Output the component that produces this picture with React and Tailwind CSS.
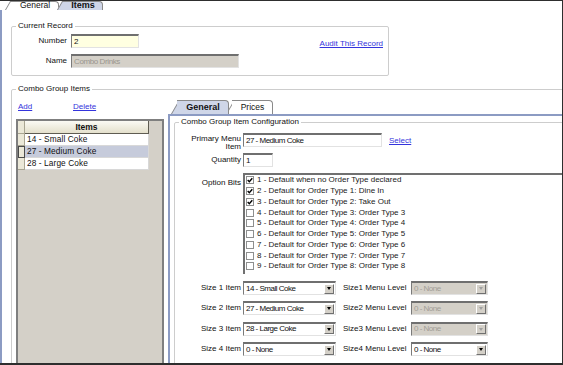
import React from "react";

const sunken =
  "border-t-2 border-l border-r border-b border-t-[#6f6f6f] border-l-[#7a7a7a] border-r-[#e2e2e2] border-b-[#e2e2e2]";
const link = "text-[#3434dc] underline leading-[10px]";

const bits = [
  [true, "1 - Default when no Order Type declared"],
  [true, "2 - Default for Order Type 1: Dine In"],
  [true, "3 - Default for Order Type 2: Take Out"],
  [false, "4 - Default for Order Type 3: Order Type 3"],
  [false, "5 - Default for Order Type 4: Order Type 4"],
  [false, "6 - Default for Order Type 5: Order Type 5"],
  [false, "7 - Default for Order Type 6: Order Type 6"],
  [false, "8 - Default for Order Type 7: Order Type 7"],
  [false, "9 - Default for Order Type 8: Order Type 8"],
];

const sizes = [
  ["Size 1 Item", "14 - Small Coke", "Size1 Menu Level", true],
  ["Size 2 Item", "27 - Medium Coke", "Size2 Menu Level", true],
  ["Size 3 Item", "28 - Large Coke", "Size3 Menu Level", true],
  ["Size 4 Item", "0 - None", "Size4 Menu Level", false],
];

const Tab = ({ label, active, className }) => {
  const bg = active ? "bg-[#cfd6e8]" : "bg-white";
  return (
    <div className={`relative h-full ${active ? "z-10 font-bold text-[9px]" : "text-[8.5px]"} ${className}`}>
      <div
        className={`absolute inset-y-0 left-0 w-[12px] -skew-x-[30deg] origin-bottom-left border-l border-t border-[#8a8a8a] ${bg}`}
      />
      <div
        className={`absolute inset-y-0 left-[6px] right-0 border-t border-r border-[#8a8a8a] rounded-tr-[4px] ${bg}`}
      />
      <span className="relative flex h-full items-center justify-center pl-[6px] leading-none">
        {label}
      </span>
    </div>
  );
};

const Select = ({ value, w, disabled }) => (
  <div
    className={`flex items-center h-[14px] ${w} ${sunken} ${
      disabled ? "bg-[#d4d0c8] text-[#a19d95]" : "bg-white"
    }`}
  >
    <span className="flex-1 pl-[2px] text-[8px] tracking-[-0.5px] leading-none whitespace-nowrap overflow-hidden">
      {value}
    </span>
    <span className="w-[10px] h-[10px] mr-[1px] bg-[#d4d0c8] border border-t-white border-l-white border-r-[#707070] border-b-[#707070] flex items-center justify-center">
      <span
        className={`border-x-[2.5px] border-x-transparent border-t-[3px] ${
          disabled ? "border-t-[#a0a0a0]" : "border-t-black"
        }`}
      />
    </span>
  </div>
);

const App = () => {
  return (
    <div className="w-[563px] h-[365px] overflow-hidden bg-white border-t border-r border-b-2 border-[#2e2e2e] text-[8px] text-[#111] font-['Liberation_Sans',Arial,sans-serif] flex flex-col">
      {/* top tabs */}
      <div className="flex h-[12px] pl-[5px] items-end">
        <Tab label="General" className="w-[54px]" />
        <Tab label="Items" active className="w-[46px] -ml-[2px]" />
      </div>
      <div className="h-[2px] bg-[#8c9bc3]" />

      <div className="flex-1 border-l-2 border-[#8c9bc3]">
        {/* Current Record */}
        <fieldset className="mt-[11px] ml-[9px] w-[378px] h-[55px] border border-[#cdcdcd] rounded-[2px]">
          <legend className="ml-[4px] px-[2px] leading-[10px]">Current Record</legend>
          <div className="flex">
            <div className="flex flex-col">
              <div className="flex items-center mt-[3px] h-[14px]">
                <span className="w-[55px] text-right">Number</span>
                <div className={`ml-[4px] w-[68px] h-[14px] bg-[#ffffe1] ${sunken} flex items-center pl-[2px] text-[8px]`}>
                  2
                </div>
              </div>
              <div className="flex items-center mt-[6px] h-[14px]">
                <span className="w-[55px] text-right">Name</span>
                <div className={`ml-[4px] w-[168px] h-[14px] bg-[#d4d0c8] text-[#9a968e] ${sunken} flex items-center pl-[2px] text-[8px] tracking-[-0.4px]`}>
                  Combo Drinks
                </div>
              </div>
            </div>
            <a className={`${link} ml-auto mr-[5px] mt-[8px]`}>Audit This Record</a>
          </div>
        </fieldset>

        {/* Combo Group Items */}
        <fieldset className="mt-[8px] ml-[9px] w-[600px] h-[300px] border border-[#cdcdcd] rounded-[2px]">
          <legend className="ml-[4px] px-[2px] leading-[10px]">Combo Group Items</legend>
          <div className="flex items-start">
            {/* list column */}
            <div className="w-[156px] flex flex-col">
              <div className="flex mt-[8px] pl-[6px]">
                <a className={`${link} w-[55px]`}>Add</a>
                <a className={link}>Delete</a>
              </div>
              <div className="mt-[7px] ml-[4px] w-[148px] h-[260px] border-2 border-[#7f7f7f] bg-[#d4d0c8]">
                <div className="flex h-[13px]">
                  <div className="w-[7px] bg-[#ebe8d8] border-r border-b border-[#a9a592]" />
                  <div className="w-[124px] bg-linear-to-b from-[#fbfaf4] to-[#e4e0cc] border-r border-b border-[#5f5c52] font-bold text-[8.5px] flex items-center justify-center">
                    Items
                  </div>
                </div>
                {["14 - Small Coke", "27 - Medium Coke", "28 - Large Coke"].map((it, i) => (
                  <div key={it} className="flex h-[12px]">
                    <div
                      className={`w-[7px] bg-[#ebe8d8] border-r border-b ${
                        i === 1 ? "border-l border-t border-[#4a4a4a]" : "border-[#a9a592]"
                      }`}
                    />
                    <div
                      className={`w-[124px] border-b border-r border-[#d8d8d8] flex items-center pl-[2px] text-[8.3px] tracking-[0.1px] ${
                        i === 1 ? "bg-[#c6cbdb]" : "bg-white"
                      }`}
                    >
                      {it}
                    </div>
                  </div>
                ))}
              </div>
            </div>

            {/* detail tabs */}
            <div className="flex-1 mt-[6px] flex flex-col">
              <div className="flex h-[14px] pl-[3px] items-end">
                <Tab label="General" active className="w-[58px]" />
                <Tab label="Prices" className="w-[47px] -ml-[3px]" />
              </div>
              <div className="h-[2px] bg-[#8c9bc3]" />
              <div className="border-l-2 border-[#8c9bc3] h-[260px]">
                <fieldset className="mt-[1px] ml-[4px] w-[420px] h-[300px] border border-[#cdcdcd] rounded-[2px]">
                  <legend className="ml-[4px] px-[2px] leading-[10px]">
                    Combo Group Item Configuration
                  </legend>

                  <div className="flex mt-[6px] h-[16px]">
                    <span className="w-[66px] text-right leading-[7.5px] pt-[2px]">
                      Primary Menu
                      <br />
                      Item
                    </span>
                    <div className={`ml-[2px] w-[139px] h-[14px] bg-white ${sunken} flex items-center pl-[2px] text-[8px] tracking-[-0.5px]`}>
                      27 - Medium Coke
                    </div>
                    <a className={`${link} ml-[7px] mt-[3px]`}>Select</a>
                  </div>

                  <div className="flex items-center mt-[4px] h-[14px]">
                    <span className="w-[66px] text-right">Quantity</span>
                    <div className={`ml-[2px] w-[30px] h-[14px] bg-white ${sunken} flex items-center pl-[2px]`}>
                      1
                    </div>
                  </div>

                  <div className="flex mt-[6px]">
                    <span className="w-[66px] text-right pt-[4px]">Option Bits</span>
                    <div className={`ml-[2px] w-[330px] h-[101px] bg-white border-t-2 border-l-2 border-[#707070]`}>
                      {bits.map(([on, label]) => (
                        <div key={label} className="flex items-center h-[10.75px]">
                          <span className="ml-[1px] mr-[3px] w-[8px] h-[8px] border border-[#8e8f8f] bg-white flex items-center justify-center">
                            {on && (
                              <svg width="6" height="6" viewBox="0 0 6 6">
                                <path d="M0.7 3 L2.3 4.7 L5.3 1.2" fill="none" stroke="#000" strokeWidth="1.4" />
                              </svg>
                            )}
                          </span>
                          <span className="text-[#1a1a1a] whitespace-nowrap">{label}</span>
                        </div>
                      ))}
                    </div>
                  </div>

                  <div className="flex flex-col gap-[6.4px] mt-[7px]">
                    {sizes.map(([l1, v, l2, dis]) => (
                      <div key={l1} className="flex items-center h-[14px]">
                        <span className="w-[66px] text-right">{l1}</span>
                        <div className="ml-[2px]">
                          <Select value={v} w="w-[93px]" />
                        </div>
                        <span className="ml-[7px] w-[68px]">{l2}</span>
                        <Select value="0 - None" w="w-[77px]" disabled={dis} />
                      </div>
                    ))}
                  </div>
                </fieldset>
              </div>
            </div>
          </div>
        </fieldset>
      </div>
    </div>
  );
};

export default App;
